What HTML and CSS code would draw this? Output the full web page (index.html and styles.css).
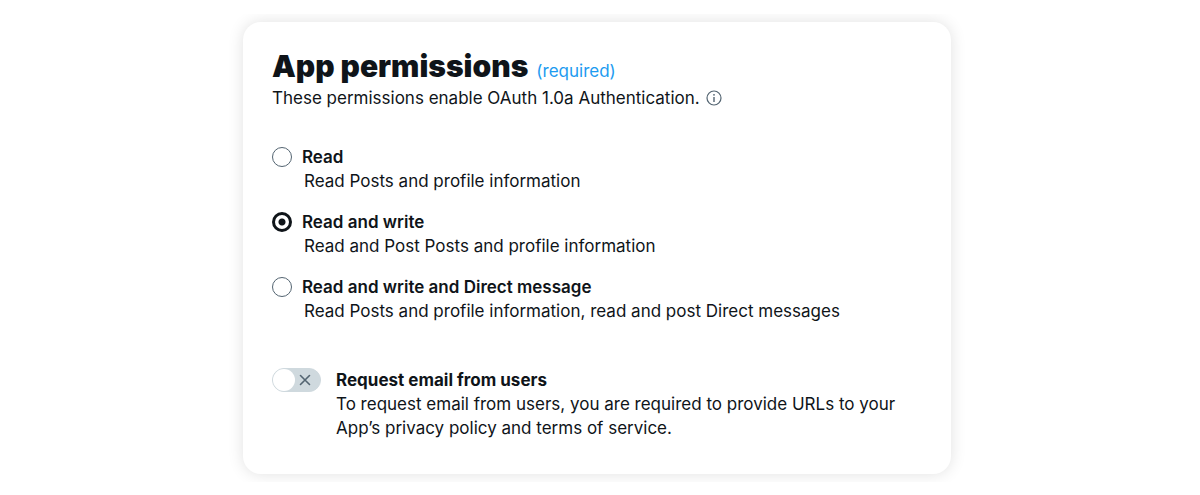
FILE: index.html
```html
<!DOCTYPE html>
<html lang="en">
<head>
    <meta charset="UTF-8">
    <meta name="viewport" content="width=device-width, initial-scale=1.0">
    <title>App permissions</title>
    <link rel="stylesheet" href="styles.css">
</head>
<body>
    <main class="frame">
        <form class="card">
            <header class="heading">
                <h1>App permissions</h1>
                <span class="required">(required)</span>
            </header>
            <p class="intro">
                These permissions enable OAuth 1.0a Authentication.
                <svg class="info" viewBox="0 0 16 16" aria-hidden="true">
                    <circle cx="8" cy="8" r="7" fill="none" stroke="#536471" stroke-width="1.2"/>
                    <circle cx="8" cy="4.8" r="0.9" fill="#536471"/>
                    <path d="M8 7v5" stroke="#536471" stroke-width="1.4"/>
                </svg>
            </p>

            <div class="options">
                <div class="option">
                    <input type="radio" name="permission" id="read">
                    <label for="read">Read</label>
                    <p>Read Posts and profile information</p>
                </div>
                <div class="option">
                    <input type="radio" name="permission" id="write" checked>
                    <label for="write">Read and write</label>
                    <p>Read and Post Posts and profile information</p>
                </div>
                <div class="option">
                    <input type="radio" name="permission" id="message">
                    <label for="message">Read and write and Direct message</label>
                    <p>Read Posts and profile information, read and post Direct messages</p>
                </div>
            </div>

            <div class="email">
                <span class="switch">
                    <input type="checkbox" id="email">
                    <svg class="cross" viewBox="0 0 12 12" aria-hidden="true">
                        <path d="M1.5 1.5l9 9M10.5 1.5l-9 9" stroke="#536471" stroke-width="1.6" stroke-linecap="round"/>
                    </svg>
                </span>
                <div>
                    <label for="email">Request email from users</label>
                    <p>To request email from users, you are required to provide URLs to your App’s privacy policy and terms of service.</p>
                </div>
            </div>
        </form>
    </main>
</body>
</html>
```

FILE: styles.css
```css
* {
    box-sizing: border-box;
}
body {
    margin: 0;
    padding: 14px 6px 0 0;
    background: #fff;
    color: #0f1419;
    font-family: Inter, "Liberation Sans", sans-serif;
    font-size: 17px;
    line-height: 24px;
}
h1, p {
    margin: 0;
}
.frame {
    max-width: 736px;
    margin: 0 auto;
    padding: 8px 14px;
    overflow: hidden;
}
.card {
    padding: 24px 29px 34px;
    border-radius: 18px;
    background: #fff;
    box-shadow: 0 0 16px rgba(0, 0, 0, 0.12);
}
.heading {
    display: flex;
    align-items: baseline;
    gap: 8px;
}
h1 {
    font-size: 30px;
    line-height: 40px;
    font-weight: 900;
}
.required {
    color: #1d9bf0;
}
.intro {
    display: flex;
    align-items: center;
    gap: 6px;
}
.info {
    width: 16px;
    height: 16px;
}
.options {
    display: grid;
    gap: 17px;
    margin-top: 35px;
}
.option {
    display: grid;
    grid-template-columns: 20px 1fr;
    column-gap: 10px;
    align-items: center;
}
.option p {
    grid-column: 2;
    padding-left: 2px;
}
.option label {
    font-weight: 600;
}
.option input {
    appearance: none;
    width: 20px;
    height: 20px;
    margin: 0;
    border: 1px solid #536471;
    border-radius: 50%;
}
.option input:checked {
    border: 3px solid #0f1419;
    background: radial-gradient(circle, #0f1419 3px, #fff 4px);
}
.email {
    display: flex;
    align-items: flex-start;
    gap: 15px;
    margin-top: 45px;
}
.email label {
    display: block;
    font-weight: 700;
}
.switch {
    position: relative;
    display: flex;
    flex: none;
}
.switch input {
    appearance: none;
    width: 49px;
    height: 24px;
    margin: 0;
    border: 1px solid #cfd9de;
    border-radius: 12px;
    background: #cfd9de;
}
.switch input::before {
    content: "";
    display: block;
    width: 22px;
    height: 22px;
    border-radius: 50%;
    background: #fff;
}
.switch input:checked::before {
    margin-left: auto;
}
.cross {
    position: absolute;
    top: 6px;
    right: 10px;
    width: 12px;
    height: 12px;
    pointer-events: none;
}
.switch input:checked + .cross {
    display: none;
}
```
